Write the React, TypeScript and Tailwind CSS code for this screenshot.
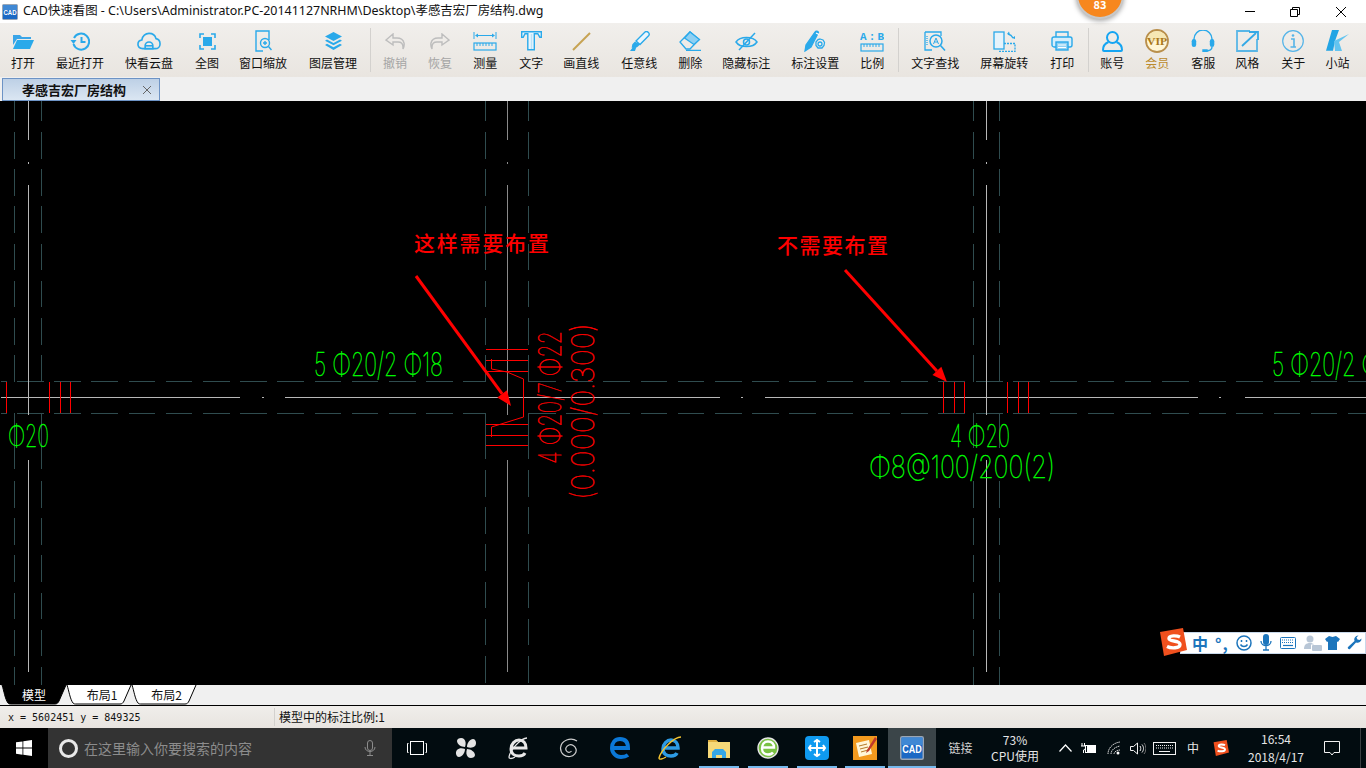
import { ReactNode } from "react";

const B = "#2aa9ea";

function CadLogo({ size }: { size: number }) {
  return (
    <svg width={size} height={size} viewBox="0 0 16 16">
      <rect x="0.500" y="0.500" width="15" height="15" rx="1" fill="#1b69c4" stroke="#9aa6b4" />
      <rect x="1" y="1" width="14" height="5" fill="#3f88d4" />
      <text x="8" y="11" textAnchor="middle" fontFamily="Liberation Sans, sans-serif" fontWeight="700" fontSize="7" fill="#fff" textLength="13" lengthAdjust="spacingAndGlyphs">CAD</text>
    </svg>
  );
}

const OpenIcon = () => (
  <svg width="22" height="15" viewBox="0 0 22 15">
    <path d="M1 1h7l2 2h9v2H5L1 11z" fill="#3aa5e8" />
    <path d="M5 6h17l-4 9H1z" fill="#2aa9ea" />
  </svg>
);
const RecentIcon = () => (
  <svg width="20" height="19" viewBox="0 0 20 19" fill="none" stroke={B} strokeWidth="2">
    <path d="M4 6a8 8 0 1 1-.5 6" />
    <path d="M0.500 8h6l-3 4z" fill={B} stroke="none" />
    <path d="M11.500 5v5h4" />
  </svg>
);
const CloudIcon = () => (
  <svg width="25" height="18" viewBox="0 0 25 18" fill="none" stroke={B} strokeWidth="1.700">
    <path d="M6 17C2.800 17 1 15 1 12.500 1 10 2.800 8.300 5 8 5.500 3.500 9 1 12.500 1c3.500 0 6.500 2.300 7.300 5.500 2.500.5 4.200 3 4.200 5.500 0 3-2.200 5-5 5z" />
    <path d="M8.500 17v-3a4 4 0 0 1 8 0v3z" fill="#f1efec" />
    <path d="M9 14h7" />
  </svg>
);
const FullIcon = () => (
  <svg width="17" height="17" viewBox="0 0 17 17" fill="none" stroke={B} strokeWidth="1.600">
    <rect x="4" y="4" width="9" height="9" fill={B} stroke="none" />
    <path d="M1 5V1h4M12 1h4v4M16 12v4h-4M5 16H1v-4" />
  </svg>
);
const ZoomWinIcon = () => (
  <svg width="17" height="22" viewBox="0 0 17 22" fill="none" stroke={B} strokeWidth="1.400">
    <path d="M14 10V1H1v20h7" />
    <circle cx="10" cy="13" r="4.500" />
    <path d="M13.500 16.500l3 3.500M8 13h4M10 11v4" />
  </svg>
);
const LayersIcon = () => (
  <svg width="17" height="18" viewBox="0 0 17 18" fill={B}>
    <path d="M8.500 0L17 4.500 8.500 9 0 4.500z" />
    <path d="M2 7.500l6.500 3.500L15 7.500l2 1.300-8.500 4.500L0 8.800z" />
    <path d="M2 11.800l6.500 3.500 6.500-3.500 2 1.200L8.500 18 0 13z" />
  </svg>
);
const UndoIcon = ({ flip }: { flip?: boolean }) => (
  <svg width="20" height="17" viewBox="0 0 20 17" fill="none" stroke="#bdbdbd" strokeWidth="1.400" className={flip ? "-scale-x-100" : ""}>
    <path d="M8 1L1 7l7 5V9h5c3 0 5 2 5 5v2c1-2 1.500-4 1-6-1-4-4-5-7-5H8z" />
  </svg>
);
const MeasureIcon = () => (
  <svg width="24" height="20" viewBox="0 0 24 20" fill="none" stroke={B} strokeWidth="1">
    <path d="M1 1v7M23 1v7M3 4.500h18" />
    <path d="M2 4.500l3-2v4zM22 4.500l-3-2v4z" fill={B} stroke="none" />
    <rect x="1" y="12" width="22" height="7" strokeWidth="1.200" />
    <path d="M4 12v3M7 12v3M10 12v3M13 12v3M16 12v3M19 12v3" />
  </svg>
);
const TextIcon = () => (
  <svg width="21" height="20" viewBox="0 0 21 20" fill="none" stroke={B} strokeWidth="1.400">
    <path d="M0.700 0.700h19.600v5.500h-1.500l-2-3.500h-3.500v16h-6.500v-16H4L2.200 6.200H.7z" fill="#e9f5fc" />
    <path d="M10.500 3v15" stroke="#b9e2f8" />
  </svg>
);
const LineIcon = () => (
  <svg width="19" height="19" viewBox="0 0 19 19">
    <path d="M1 18L18 1" stroke="#c6a352" strokeWidth="2" />
  </svg>
);
const PenIcon = () => (
  <svg width="21" height="21" viewBox="0 0 21 21" fill="none" stroke={B} strokeWidth="1.400">
    <path d="M7 10l9-9c1-.8 2.500-.5 3.400.4.900 1 1 2.400.2 3.300L11 13.500z" fill="#eaf6fd" />
    <path d="M6 11.500l-2 2-.5 2.500 3 .2 2-1.200 1.500-1.500z" fill={B} />
    <path d="M1 20l3-4 3 1-1 3z" fill={B} stroke="none" />
  </svg>
);
const EraserIcon = () => (
  <svg width="23" height="20" viewBox="0 0 23 20" fill="none" stroke={B} strokeWidth="1.300">
    <path d="M1 11L11 1l9 7.500L11 18H7z" />
    <path d="M5.500 7l9.500 6.500 5.500-5L11 1z" fill="#8ed0f3" stroke={B} />
    <path d="M7 19.400h15" />
  </svg>
);
const EyeIcon = () => (
  <svg width="23" height="19" viewBox="0 0 23 19" fill="none" stroke={B} strokeWidth="1.500">
    <path d="M1 10c4-6 17-6 21 0-4 6-17 6-21 0z" />
    <circle cx="11.500" cy="10" r="3" />
    <path d="M4 18L20 1" />
  </svg>
);
const PenGearIcon = () => (
  <svg width="22" height="22" viewBox="0 0 22 22" fill="none" stroke={B} strokeWidth="1.300">
    <path d="M1 21l1-6 9-13c1-1.500 3-1 3.500.5L7 17z" fill={B} />
    <path d="M12 3l3 1.500" stroke="#fff" />
    <path d="M16 9l3 1 1.500 2.500-.5 3-2 2.500h-4l-2-2.500v-3.500l2-2.500z" fill="#f1efec" />
    <circle cx="16" cy="14" r="2" />
  </svg>
);
const ScaleIcon = () => (
  <svg width="24" height="21" viewBox="0 0 24 21">
    <text x="0" y="9" fontFamily="Liberation Mono, monospace" fontWeight="700" fontSize="11" fill={B} textLength="24">A:B</text>
    <rect x="1" y="13" width="22" height="7" fill="none" stroke={B} strokeWidth="1.200" />
    <path d="M4 13v3M7 13v3M10 13v3M13 13v3M16 13v3M19 13v3" stroke={B} />
  </svg>
);
const FindIcon = () => (
  <svg width="22" height="21" viewBox="0 0 22 21" fill="none" stroke={B} strokeWidth="1.300">
    <path d="M1 1h16v4M1 1v18h7" />
    <path d="M3 5v10" strokeDasharray="1 1" />
    <circle cx="12" cy="10" r="6" strokeWidth="1.500" />
    <path d="M16.500 14.500l4.500 5" strokeWidth="1.600" />
    <path d="M9.500 13l2.500-6 2.500 6M10.500 11h3" strokeWidth="1" />
  </svg>
);
const RotateIcon = () => (
  <svg width="23" height="21" viewBox="0 0 23 21" fill="none" stroke={B} strokeWidth="1.300">
    <rect x="1" y="1" width="10" height="17" fill="#e6f3fb" />
    <path d="M6 20.500h16v-8H11" strokeDasharray="2 1" />
    <path d="M15 3c2 .5 4 2 5 4" />
    <path d="M16 .5l-2 2.500 3 1zM22 5l-3 2 3 1z" fill={B} stroke="none" />
  </svg>
);
const PrintIcon = () => (
  <svg width="22" height="20" viewBox="0 0 22 20" fill="none" stroke={B} strokeWidth="1.400">
    <path d="M5 6V1h12v5" />
    <path d="M5 16H3c-1 0-2-1-2-2V8c0-1 1-2 2-2h16c1 0 2 1 2 2v6c0 1-1 2-2 2h-2" fill="#d6eefb" />
    <rect x="5" y="11" width="12" height="8" fill="#8ed0f3" />
    <path d="M7 14h8M7 16.500h8" stroke="#fff" strokeWidth="1" />
  </svg>
);
const UserIcon = () => (
  <svg width="21" height="21" viewBox="0 0 21 21" fill="none" stroke="#16a5f2" strokeWidth="2">
    <ellipse cx="10.500" cy="6.500" rx="5.500" ry="5.500" />
    <path d="M6.500 11C3 12.500 1 15.500 1 19c0 1 .5 1 1 1h17c.5 0 1 0 1-1 0-3.500-2-6.500-5.500-8" />
  </svg>
);
const VipIcon = () => (
  <svg width="24" height="24" viewBox="0 0 24 24">
    <circle cx="12" cy="12" r="11" fill="#fff6d6" stroke="#b98f4c" strokeWidth="1.800" />
    <path d="M2 12a10 10 0 0 1 20 0z" fill="#f6e7b4" />
    <text x="12" y="16" textAnchor="middle" fontFamily="Liberation Serif, serif" fontWeight="700" fontSize="11" fill="#a9781a" textLength="20" lengthAdjust="spacingAndGlyphs">VIP</text>
  </svg>
);
const HeadsetIcon = () => (
  <svg width="24" height="22" viewBox="0 0 24 22" fill="none" stroke={B} strokeWidth="1.400">
    <path d="M3 11V9a9 9 0 0 1 18 0v2" />
    <rect x="0.700" y="9" width="4.500" height="8" rx="2.200" fill={B} stroke="none" />
    <rect x="18.800" y="9" width="4.500" height="8" rx="2.200" fill={B} stroke="none" />
    <path d="M21 17c0 3-3 4-7 4" />
    <path d="M12 20h4v1.500h-4z" fill={B} />
  </svg>
);
const StyleIcon = () => (
  <svg width="23" height="22" viewBox="0 0 23 22" fill="none" stroke="#34a9e6" strokeWidth="1.800">
    <path d="M14 1H1v20h20V9" opacity="0.800" />
    <path d="M6 16L20 3M13 2h9v8" />
  </svg>
);
const InfoIcon = () => (
  <svg width="22" height="22" viewBox="0 0 22 22" fill="none" stroke="#55b4e8" strokeWidth="1.200">
    <circle cx="11" cy="11" r="10.300" />
    <path d="M9 9h3v8M8.500 17h5.500" strokeWidth="1.600" />
    <circle cx="11" cy="5.500" r="1.300" fill="#55b4e8" stroke="none" />
  </svg>
);
const SiteIcon = () => (
  <svg width="23" height="22" viewBox="0 0 23 22">
    <path d="M6 0h7L9 11l-2 9.800H0z" fill="#23a4e4" />
    <path d="M8 11L23 4 13 12l3 9H9z" fill="#63c4f0" />
  </svg>
);

type Tool = { label: string; icon: ReactNode; cls: string; tone?: string };

const tools: Tool[] = [
  { label: "打开", icon: <OpenIcon />, cls: "ml-[11px]" },
  { label: "最近打开", icon: <RecentIcon />, cls: "ml-[21px]" },
  { label: "快看云盘", icon: <CloudIcon />, cls: "ml-[21px]" },
  { label: "全图", icon: <FullIcon />, cls: "ml-[22px]" },
  { label: "窗口缩放", icon: <ZoomWinIcon />, cls: "ml-[20px]" },
  { label: "图层管理", icon: <LayersIcon />, cls: "ml-[22px]" },
  { label: "|", icon: null, cls: "ml-[13px]" },
  { label: "撤销", icon: <UndoIcon />, cls: "ml-[12px]", tone: "text-[#a5a5a5]" },
  { label: "恢复", icon: <UndoIcon flip />, cls: "ml-[21px]", tone: "text-[#a5a5a5]" },
  { label: "测量", icon: <MeasureIcon />, cls: "ml-[21px]" },
  { label: "文字", icon: <TextIcon />, cls: "ml-[22px]" },
  { label: "画直线", icon: <LineIcon />, cls: "ml-[20px]" },
  { label: "任意线", icon: <PenIcon />, cls: "ml-[22px]" },
  { label: "删除", icon: <EraserIcon />, cls: "ml-[21px]" },
  { label: "隐藏标注", icon: <EyeIcon />, cls: "ml-[20px]" },
  { label: "标注设置", icon: <PenGearIcon />, cls: "ml-[21px]" },
  { label: "比例", icon: <ScaleIcon />, cls: "ml-[21px]" },
  { label: "|", icon: null, cls: "ml-[14px]" },
  { label: "文字查找", icon: <FindIcon />, cls: "ml-[12px]" },
  { label: "屏幕旋转", icon: <RotateIcon />, cls: "ml-[21px]" },
  { label: "打印", icon: <PrintIcon />, cls: "ml-[22px]" },
  { label: "|", icon: null, cls: "ml-[14px]" },
  { label: "账号", icon: <UserIcon />, cls: "ml-[11px]" },
  { label: "会员", icon: <VipIcon />, cls: "ml-[21px]", tone: "text-[#bb8a2c]" },
  { label: "客服", icon: <HeadsetIcon />, cls: "ml-[22px]" },
  { label: "风格", icon: <StyleIcon />, cls: "ml-[20px]" },
  { label: "关于", icon: <InfoIcon />, cls: "ml-[22px]" },
  { label: "小站", icon: <SiteIcon />, cls: "ml-[20px]" },
];

function Toolbar() {
  return (
    <div className="flex h-[54px] items-start bg-gradient-to-b from-[#f1efec] to-[#e9e5e0]">
      {tools.map((t, i) =>
        t.label === "|" ? (
          <div key={i} className={`${t.cls} mt-[5px] h-[44px] w-px bg-[#d3d1ce]`} />
        ) : (
          <div key={i} className={`${t.cls} flex w-min flex-col items-center pt-[5px]`}>
            <div className="flex h-[26px] w-[24px] items-center justify-center">{t.icon}</div>
            <div className={`mt-px text-[12px] leading-[16px] whitespace-nowrap ${t.tone ?? "text-[#111]"}`}>{t.label}</div>
          </div>
        )
      )}
    </div>
  );
}

// 几段虚线，周期和长度量自原图
function dashes(from: number, to: number, first = from) {
  const out: [number, number][] = [];
  for (let p = first; p < to; p += 37.2) {
    const a = Math.max(p, from);
    const b = Math.min(p + 26.5, to);
    if (b > a) out.push([a, b]);
  }
  return out;
}

const TEAL = "#2f4c4f";
const GREY = "#b8b8b8";
const RED = "#ff0000";
const GREEN = "#00ff00";

function HDash({ y }: { y: number }) {
  const segs = [
    ...dashes(1, 7),
    ...dashes(17, 485),
    ...dashes(529, 965),
    ...dashes(976, 1366),
  ];
  return (
    <>
      {segs.map(([a, b], i) => (
        <line key={i} x1={a} x2={b} y1={y} y2={y} stroke={TEAL} />
      ))}
    </>
  );
}

function VDash({ x, lower, next }: { x: number; lower: number; next: number }) {
  const segs = [...dashes(101, 381.500, 94.800), [413, lower] as [number, number], ...dashes(next, 685)];
  return (
    <>
      {segs.map(([a, b], i) => (
        <line key={i} x1={x} x2={x} y1={a} y2={b} stroke={TEAL} />
      ))}
    </>
  );
}

function Label({ x, y, w, size, fill, rot, children }: { x: number; y: number; w: number; size: number; fill: string; rot?: boolean; children: string }) {
  return (
    <text
      x={x}
      y={y}
      fontFamily="Inter, Liberation Sans, sans-serif"
      fontWeight="100"
      fontSize={size}
      fill={fill}
      stroke={fill}
      strokeWidth="0.450"
      textLength={w}
      lengthAdjust="spacingAndGlyphs"
      transform={rot ? `rotate(-90 ${x} ${y})` : undefined}
    >
      {children}
    </text>
  );
}

function Arrow({ x1, y1, x2, y2 }: { x1: number; y1: number; x2: number; y2: number }) {
  const dx = x2 - x1;
  const dy = y2 - y1;
  const len = Math.hypot(dx, dy);
  const ux = dx / len;
  const uy = dy / len;
  const bx = x2 - ux * 15;
  const by = y2 - uy * 15;
  return (
    <>
      <line x1={x1} y1={y1} x2={bx} y2={by} stroke={RED} strokeWidth="3" />
      <polygon points={`${x2},${y2} ${bx - uy * 6},${by + ux * 6} ${bx + uy * 6},${by - ux * 6}`} fill={RED} />
    </>
  );
}

function Drawing() {
  const rebars = [6.500, 49.500, 60.500, 70.500, 943.500, 954.500, 964.500, 1007.500, 1018.500, 1028.500];
  const hoops = [349.500, 360.500, 371.500, 424.500, 435.500, 445.500];
  return (
    <svg className="block h-full w-full" viewBox="0 101 1366 584">
      <g shapeRendering="crispEdges">
        <HDash y={381.500} />
        <HDash y={413.500} />
        <VDash x={14.500} lower={469} next={481} />
        <VDash x={41.500} lower={469} next={481} />
        <VDash x={485.500} lower={459} next={470} />
        <VDash x={528.500} lower={459} next={470} />
        <VDash x={973.500} lower={448} next={481} />
        <VDash x={999.500} lower={448} next={481} />

        {[28.500, 507.500, 986.500].map((x) => (
          <g key={x} stroke={x === 507.500 ? "#8a8a8a" : GREY}>
            <line x1={x} x2={x} y1={101} y2={140} />
            <line x1={x} x2={x} y1={162} y2={164} />
            <line x1={x} x2={x} y1={185} y2={415} />
            <line x1={x} x2={x} y1={460} y2={672} />
          </g>
        ))}
        {[[1, 240], [262, 264], [285, 720], [741, 743], [765, 1198], [1219, 1221], [1245, 1366]].map(([a, b]) => (
          <line key={a} x1={a} x2={b} y1={397.500} y2={397.500} stroke={GREY} />
        ))}

        {rebars.map((x) => (
          <line key={x} x1={x} x2={x} y1={382} y2={413} stroke={RED} />
        ))}
        {hoops.map((y) => (
          <line key={y} x1={486} x2={528} y1={y} y2={y} stroke={RED} />
        ))}
      </g>
      <polyline points="491.500,359 491.500,369 507,372 523.500,379 523.500,417 491.500,427 491.500,437" fill="none" stroke={RED} />

      <Arrow x1={416} y1={276} x2={511} y2={406} />
      <Arrow x1={845} y1={270} x2={947} y2={382} />

      <text x="414" y="251" fill={RED} fontFamily="Noto Sans CJK SC, sans-serif" fontWeight="500" fontSize="21" letterSpacing="1.800">这样需要布置</text>
      <text x="777" y="253" fill={RED} fontFamily="Noto Sans CJK SC, sans-serif" fontWeight="500" fontSize="21" letterSpacing="1.500">不需要布置</text>

      <Label x={314} y={376} w={129} size={33} fill={GREEN}>5 Φ20/2 Φ18</Label>
      <Label x={1272} y={376} w={129} size={33} fill={GREEN}>5 Φ20/2 Φ18</Label>
      <Label x={8} y={447} w={41} size={31} fill={GREEN}>Φ20</Label>
      <Label x={950} y={447} w={60} size={31} fill={GREEN}>4 Φ20</Label>
      <Label x={869} y={478} w={186} size={31} fill={GREEN}>Φ8@100/200(2)</Label>
      <Label x={561} y={464} w={133} size={31} fill={RED} rot>4 Φ20/7 Φ22</Label>
      <Label x={594} y={500} w={177} size={31} fill={RED} rot>(0.000/0.300)</Label>
    </svg>
  );
}

function ImeLogo({ size }: { size: number }) {
  return (
    <svg width={size} height={size} viewBox="0 0 28 28">
      <path d="M1 4l23-4 4 22-23 6z" fill="#f0501e" />
      <path d="M21 9c-3-1.500-11-2-11 1.500 0 3.500 11 1.500 11 6 0 4-9 4-13 2" fill="none" stroke="#fff" strokeWidth="3.400" />
    </svg>
  );
}

function ImeBar() {
  const c = "#1c75bc";
  return (
    <div className="absolute top-[527px] left-[1159px] flex items-center">
      <div className="relative z-10 flex">
        <ImeLogo size={28} />
      </div>
      <div className="mt-[1px] -ml-[7px] flex h-[22px] w-[186px] items-center border border-[#c8d8ea] bg-white pl-[11px] text-[16px] leading-none font-bold text-[#1c75bc]">
        <span className="w-[23px]">中</span>
        <span className="w-[21px] tracking-[1px]">°,</span>
        <svg width="16" height="16" viewBox="0 0 16 16" fill="none" stroke={c} strokeWidth="1.500">
          <circle cx="8" cy="8" r="7" />
          <path d="M4.500 9.500c1.500 2.500 5.500 2.500 7 0M5.500 5v2M10.500 5v2" />
        </svg>
        <svg className="ml-[8px]" width="12" height="17" viewBox="0 0 12 17" fill={c}>
          <rect x="3" y="0" width="6" height="11" rx="3" />
          <path d="M1 7c0 6 10 6 10 0M6 12v4M3 16h6" fill="none" stroke={c} strokeWidth="1.300" />
        </svg>
        <svg className="ml-[8px]" width="16" height="12" viewBox="0 0 16 12">
          <rect x="0.500" y="0.500" width="15" height="11" rx="1" fill="none" stroke={c} />
          <path d="M2 3h12M2 5.500h12" stroke={c} strokeDasharray="1 1" strokeWidth="1.200" />
          <path d="M3 8.500h10" stroke={c} strokeWidth="1.200" />
        </svg>
        <svg className="ml-[8px]" width="18" height="16" viewBox="0 0 18 16" fill="#b8c6d6">
          <circle cx="6" cy="4" r="3.500" />
          <path d="M0 14c0-4 2-6 6-6 2 0 3 .5 4 1.500H7V14z" />
          <rect x="8" y="10" width="10" height="6" rx="1" />
        </svg>
        <svg className="ml-[3px]" width="15" height="14" viewBox="0 0 15 14" fill={c}>
          <path d="M4 0l3.500 1L11 0l4 3-2 3-1-.5V14H3V5.500L2 6 0 3z" />
        </svg>
        <svg className="ml-[7px]" width="15" height="15" viewBox="0 0 15 15" fill={c}>
          <path d="M14.500 3.500A4 4 0 0 1 9 7.500L3 14c-1 1-3-1-2-2l6.500-6A4 4 0 0 1 11.500.500L9.500 2.500l1 2 2 .5z" />
        </svg>
      </div>
    </div>
  );
}

function LayoutTab({ label, active, cls }: { label: string; active?: boolean; cls: string }) {
  return (
    <div className={`relative flex h-[20px] items-center justify-center text-[12px] ${cls} ${active ? "text-white" : "text-[#111]"}`}>
      <svg className="absolute inset-0" width="100%" height="20" viewBox="0 0 66 20" preserveAspectRatio="none">
        <path
          d="M1 0c2 6 3 14 6 18 1 1 2 1 3 1h44c2 0 3-1 4-3l7-16"
          fill={active ? "#000" : "#fff"}
          stroke="#000"
          strokeWidth="1"
          vectorEffect="non-scaling-stroke"
        />
      </svg>
      <span className="relative">{label}</span>
    </div>
  );
}

const FanIcon = () => (
  <svg width="22" height="22" viewBox="0 0 22 22" fill="#e4e4e4">
    <path d="M10 10C6 10 2 7 2 4c0-3 5-4 7-2 2 2 2 5 1 8zM12 10c0-4 3-8 6-8 3 0 4 5 2 7-2 2-5 2-8 1zM12 12c4 0 8 3 8 6 0 3-5 4-7 2-2-2-2-5-1-8zM10 12c0 4-3 8-6 8-3 0-4-5-2-7 2-2 5-2 8-1z" />
  </svg>
);
const IeMono = () => (
  <svg width="22" height="24" viewBox="0 0 22 24" fill="none" stroke="#e8e8e8" strokeWidth="3">
    <path d="M4 12h15c0-5-3-8-7-8S4 8 4 13s4 7 8 7c3 0 5-1 6-3" />
    <path d="M20 2C14 2 3 14 2 21c0 2 3 2 6 0" strokeWidth="1.300" />
  </svg>
);
const SwirlIcon = () => (
  <svg width="20" height="20" viewBox="0 0 20 20" fill="none" stroke="#cfcfcf" strokeWidth="1.200">
    <path d="M18 3C12-1 2 2 1.500 10c0 6 5 9 9.500 8.500 4-.5 7-4 6-7.500-1-3-4-5-7-4-3 1-4 4-2.500 6 1.500 2 4 1.500 5 0" />
  </svg>
);
const EdgeIcon = () => (
  <svg width="21" height="22" viewBox="0 0 21 22" fill="none" stroke="#0b78d7" strokeWidth="4">
    <path d="M3 11h15c0-6-3-9-8-9S2 6 2 11s4 9 9 9c3 0 5-.5 7-2" />
  </svg>
);
const IeColor = () => (
  <svg width="24" height="24" viewBox="0 0 24 24" fill="none">
    <path d="M5 12h15c0-5-3-8-7-8s-8 4-8 9 4 7 8 7c3 0 5-1 6-3" stroke="#2d9be4" strokeWidth="3.500" />
    <path d="M23 1C16 1 3 14 1 22c0 2 4 1 7-1" stroke="#f4c430" strokeWidth="1.400" />
  </svg>
);
const FolderIcon = () => (
  <svg width="22" height="19" viewBox="0 0 22 19">
    <path d="M0 1h8l2 2h12v16H0z" fill="#f6d978" />
    <path d="M0 1h8l2 2H0z" fill="#e0b040" />
    <path d="M4 19v-6l3-3h8l3 3v6h-4v-3H8v3z" fill="#35a6e6" />
  </svg>
);
const GreenE = () => (
  <svg width="22" height="24" viewBox="0 0 22 24">
    <circle cx="11" cy="12" r="10" fill="#7ac143" stroke="#e6e6e6" strokeWidth="1.400" />
    <path d="M5 11.500h12c0-4-2-6-6-6s-6 3-6 7 3 6 6 6c2 0 4-.5 5-2" fill="none" stroke="#fff" strokeWidth="2.400" />
  </svg>
);
const BlueApp = () => (
  <svg width="24" height="24" viewBox="0 0 24 24">
    <rect width="24" height="24" rx="4" fill="#0f9af0" />
    <path d="M12 4v16M4 12h16M9 6l3-2 3 2M9 18l3 2 3-2M6 9l-2 3 2 3M18 9l2 3-2 3" fill="none" stroke="#fff" strokeWidth="2" />
  </svg>
);
const NoteApp = () => (
  <svg width="24" height="24" viewBox="0 0 24 24">
    <rect width="24" height="24" fill="#f39a1e" />
    <path d="M3 7l13-3 3 14-13 3z" fill="#fff6d8" />
    <path d="M6 10l8-2M7 13l8-2M8 16l7-2" stroke="#b57a2a" />
    <path d="M22 1L14 14l-1 3 3-2 8-12z" fill="#c0392b" />
  </svg>
);

function TaskIcon({ cls, bar, children }: { cls: string; bar?: boolean; children: ReactNode }) {
  return (
    <div className={`relative flex h-full items-center justify-center ${cls}`}>
      {children}
      {bar && <div className="absolute bottom-0 left-1/2 h-[2px] w-[40px] -translate-x-1/2 bg-[#76b9ed]" />}
    </div>
  );
}

function Taskbar() {
  return (
    <div className="flex h-[40px] bg-[#020c10] text-[#e6e6e6]">
      <div className="flex w-[48px] items-center justify-center bg-black">
        <svg width="16" height="16" viewBox="0 0 16 16" fill="#fff">
          <path d="M0 2.300l6.500-.9v6.200H0zM7.300 1.300L16 0v7.600H7.300zM0 8.400h6.500v6.300L0 13.800zM7.300 8.400H16V16l-8.700-1.200z" />
        </svg>
      </div>
      <div className="flex w-[344px] items-center bg-[#333333] pl-[11px]">
        <div className="h-[19px] w-[19px] rounded-full border-[3px] border-[#e8e8e8]" />
        <span className="ml-[6px] text-[14px] text-[#8c8c8c]">在这里输入你要搜索的内容</span>
        <svg className="ml-[112px]" width="12" height="16" viewBox="0 0 12 16" fill="none" stroke="#8c8c8c">
          <rect x="3.500" y="0.500" width="5" height="10" rx="2.500" />
          <path d="M1 7c0 6 10 6 10 0M6 12v3.500M3 15.500h6" />
        </svg>
      </div>
      <TaskIcon cls="w-[49px]">
        <svg width="20" height="14" viewBox="0 0 20 14" fill="none" stroke="#fff">
          <rect x="3.500" y="0.500" width="13" height="13" />
          <path d="M1.500 2.500H.5v9h1M18.500 2.500h1v9h-1" />
        </svg>
      </TaskIcon>
      <TaskIcon cls="w-[50px]"><FanIcon /></TaskIcon>
      <TaskIcon cls="w-[54px]"><IeMono /></TaskIcon>
      <TaskIcon cls="w-[47px]"><SwirlIcon /></TaskIcon>
      <TaskIcon cls="ml-[4px] w-[49px]"><EdgeIcon /></TaskIcon>
      <TaskIcon cls="w-[49px]"><IeColor /></TaskIcon>
      <TaskIcon cls="w-[49px]" bar><FolderIcon /></TaskIcon>
      <TaskIcon cls="w-[49px]" bar><GreenE /></TaskIcon>
      <TaskIcon cls="w-[49px]" bar><BlueApp /></TaskIcon>
      <TaskIcon cls="w-[47px]" bar><NoteApp /></TaskIcon>
      <div className="relative flex h-full w-[48px] items-center justify-center bg-[#3b4549]">
        <CadLogo size={24} />
        <div className="absolute bottom-0 left-0 h-[2px] w-full bg-[#76b9ed]" />
      </div>
      <div className="flex w-[49px] items-center justify-center text-[12px] text-[#d2d2d2]">链接</div>
      <div className="flex w-[60px] flex-col items-center justify-center text-[12px] leading-[16px]">
        <span>73%</span>
        <span>CPU使用</span>
      </div>
      <div className="w-[8px]" />
      <TaskIcon cls="w-[24px]">
        <svg width="13" height="8" viewBox="0 0 13 8" fill="none" stroke="#fff" strokeWidth="1.200"><path d="M.5 7.500l6-6.500 6 6.500" /></svg>
      </TaskIcon>
      <TaskIcon cls="w-[24px]">
        <svg width="16" height="11" viewBox="0 0 16 11" fill="none" stroke="#fff">
          <rect x="4.500" y="2.500" width="10" height="7" />
          <rect x="6" y="3" width="8" height="6" fill="#fff" stroke="none" />
          <path d="M1 0v3M3.500 0v3M0 3h4.500v2a2 2 0 0 1-2 2v3" />
        </svg>
      </TaskIcon>
      <TaskIcon cls="ml-px w-[24px]">
        <svg width="14" height="14" viewBox="0 0 14 14" fill="none" stroke="#d8d8d8" strokeDasharray="1.500 .6">
          <path d="M1 13C1 7 6 2 13 1M4 13c0-4 4-7 9-8M7 13c0-2 3-4 6-4" />
          <circle cx="11" cy="12" r="1.500" fill="#fff" stroke="none" />
        </svg>
      </TaskIcon>
      <TaskIcon cls="w-[24px]">
        <svg width="16" height="13" viewBox="0 0 16 13" fill="none" stroke="#f2f2f2">
          <path d="M.5 4.500h3l4-3.500v11l-4-3.500h-3z" />
          <path d="M10 4c1 1.500 1 3.500 0 5M12 2.500c2 2.500 2 5.500 0 8" />
          <path d="M14 1c2.500 3 2.500 8 0 11" stroke="#777" />
        </svg>
      </TaskIcon>
      <TaskIcon cls="w-[29px]">
        <svg width="23" height="13" viewBox="0 0 23 13" fill="none" stroke="#f2f2f2">
          <rect x="0.500" y="0.500" width="22" height="12" />
          <path d="M3 3.500h17M3 6h17" strokeDasharray="1 1" />
          <path d="M6 9.500h11" />
        </svg>
      </TaskIcon>
      <div className="flex w-[28px] items-center justify-center text-[12px]">中</div>
      <TaskIcon cls="w-[28px]"><ImeLogo size={16} /></TaskIcon>
      <div className="flex w-[82px] flex-col items-center justify-center text-[12px] leading-[18px]">
        <span>16:54</span>
        <span>2018/4/17</span>
      </div>
      <TaskIcon cls="w-[30px]">
        <svg width="16" height="16" viewBox="0 0 16 16" fill="none" stroke="#f2f2f2"><path d="M.5 1.500h15v11H10L8 15l-2-2.500H.5z" /></svg>
      </TaskIcon>
      <div className="ml-[13px] h-full w-px bg-[#3a3f42]" />
    </div>
  );
}

export default function App() {
  return (
    <div className="relative flex h-[768px] w-[1366px] flex-col overflow-hidden bg-black font-['Noto_Sans_CJK_SC','Noto_Sans',sans-serif]">
      <div className="relative flex h-[23px] items-center bg-white pl-[2px] text-[#111]">
        <CadLogo size={16} />
        <span className="ml-[5px] font-['Noto_Sans','Noto_Sans_CJK_SC',sans-serif] text-[12.45px] whitespace-nowrap">
          CAD快速看图 - C:\Users\Administrator.PC-20141127NRHM\Desktop\孝感吉宏厂房结构.dwg
        </span>
        <div className="ml-auto flex h-full items-center">
          <svg width="10" height="1" viewBox="0 0 10 1"><path d="M0 .5h10" stroke="#000" /></svg>
          <svg className="ml-[35px]" width="10" height="10" viewBox="0 0 10 10" fill="none" stroke="#000">
            <path d="M.5 2.500h7v7h-7zM2.500 2.500v-2h7v7h-2" />
          </svg>
          <svg className="mr-[20px] ml-[36px]" width="10" height="10" viewBox="0 0 10 10" stroke="#000"><path d="M0 0l10 10M10 0L0 10" /></svg>
        </div>
        <div className="absolute top-[-29px] left-[1076px] flex h-[48px] w-[48px] items-end justify-center rounded-full border-2 border-[#c8c8c8] bg-[#f7871e] pb-[6px] text-[11px] leading-[14px] font-bold text-white shadow-[0_2px_5px_rgba(0,0,0,0.35)]">
          83
        </div>
      </div>

      <Toolbar />

      <div className="flex h-[24px] items-start bg-[#f0f0f0] pt-px pl-[2px]">
        <div className="flex h-[23px] w-[158px] items-center border border-[#6d93c5] bg-gradient-to-b from-[#bdd0e6] to-[#dbe6f2] pl-[19px] text-[13px] font-bold text-[#111]">
          孝感吉宏厂房结构
          <svg className="ml-[17px]" width="8" height="8" viewBox="0 0 8 8" stroke="#666"><path d="M0 0l8 8M8 0L0 8" /></svg>
        </div>
      </div>

      <div className="relative h-[584px] bg-black">
        <Drawing />
        <ImeBar />
      </div>

      <div className="flex h-[21px] items-start border-b border-black bg-[#f0f0f0] pl-[1px]">
        <LayoutTab label="模型" active cls="w-[66px]" />
        <LayoutTab label="布局1" cls="-ml-px w-[66px] pl-[6px]" />
        <LayoutTab label="布局2" cls="-ml-px w-[66px] pl-[5px]" />
      </div>

      <div className="flex h-[22px] items-center bg-gradient-to-b from-[#f0eeeb] to-[#e8e4e0] text-[#111]">
        <span className="w-[274px] pl-[8px] font-['DejaVu_Sans_Mono',monospace] text-[10px]">x = 5602451 y = 849325</span>
        <div className="h-[18px] w-px bg-[#d3d1ce]" />
        <span className="ml-[4px] text-[12px]">模型中的标注比例:1</span>
      </div>

      <Taskbar />
    </div>
  );
}
